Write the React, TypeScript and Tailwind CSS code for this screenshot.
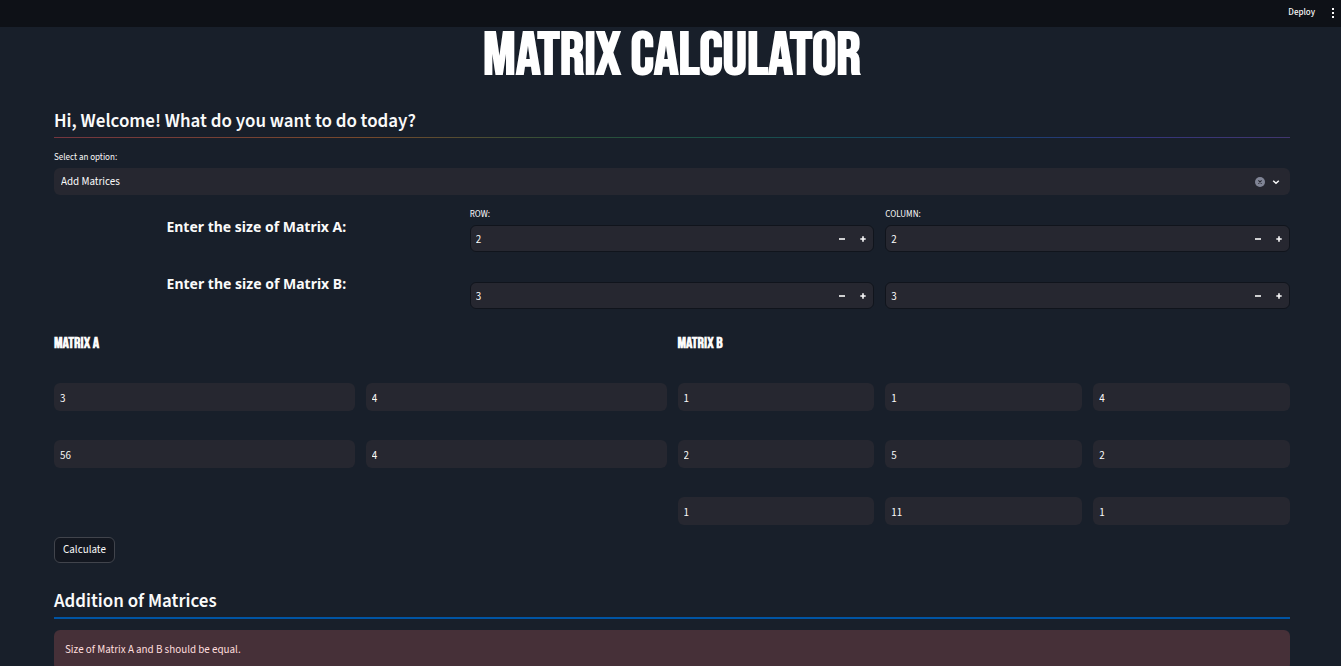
import React, { useState } from "react";

const sans = "font-['Source_Sans_Pro','Source_Sans_3','Noto_Sans_CJK_JP','Open_Sans',sans-serif]";
const display = "font-['Bebas_Neue','Roboto_Condensed',Roboto,sans-serif] font-bold";

function StepperGlyph({ plus }: { plus?: boolean }) {
  return (
    <svg viewBox="0 0 8 8" className="size-2" aria-hidden="true">
      <path d={plus ? "M1.3 3.2h1.9V1.3h1.6v1.9h1.9v1.6H4.8v1.9H3.2V4.8H1.3z" : "M1 3.2h6v1.6H1z"} fill="#fafafa" />
    </svg>
  );
}

function SizeInput({ label, name, initial }: { label?: string; name: string; initial: number }) {
  const [value, setValue] = useState(initial);
  return (
    <div className="flex flex-col">
      <label htmlFor={name} className="block h-[18px] text-[9px] leading-4">
        {label}
      </label>
      <div className="flex h-[27px] items-center rounded-md border border-[#10141c] bg-[#262730]">
        <input
          id={name}
          aria-label={name}
          value={value}
          onChange={(e) => setValue(Number(e.target.value) || 0)}
          className="h-full min-w-0 flex-1 bg-transparent px-[5px] pt-[2px] text-[11px] outline-none"
        />
        <button aria-label={`Decrease ${name}`} onClick={() => setValue(value - 1)} className="flex h-full w-[22px] items-center justify-center">
          <StepperGlyph />
        </button>
        <button aria-label={`Increase ${name}`} onClick={() => setValue(value + 1)} className="flex h-full w-5 items-center justify-center">
          <StepperGlyph plus />
        </button>
      </div>
    </div>
  );
}

function SizeRow({ matrix, size, labelled }: { matrix: string; size: number; labelled?: boolean }) {
  return (
    <div className="grid grid-cols-3 gap-[11px]">
      <h3 className="pt-[10px] text-center font-['Noto_Sans',sans-serif] text-[14px] font-bold leading-5">
        Enter the size of Matrix {matrix}:
      </h3>
      <SizeInput label={labelled ? "ROW:" : undefined} name={`Matrix ${matrix} rows`} initial={size} />
      <SizeInput label={labelled ? "COLUMN:" : undefined} name={`Matrix ${matrix} columns`} initial={size} />
    </div>
  );
}

function Cell({ name, value }: { name: string; value: string }) {
  return (
    <input
      aria-label={name}
      defaultValue={value}
      className="h-7 w-full min-w-0 rounded-md bg-[#262730] px-[6px] pt-[2px] text-[11px] outline-none"
    />
  );
}

function Matrix({ name, rows, columns }: { name: string; rows: string[][]; columns: string }) {
  return (
    <section>
      <h3 className={`${display} text-[16px] leading-[18px]`}>MATRIX {name}</h3>
      <div className="mt-[30px] flex flex-col gap-[29px]">
        {rows.map((row, r) => (
          <div key={r} className={`grid gap-[11px] ${columns}`}>
            {row.map((v, c) => (
              <Cell key={c} name={`${name} ${r + 1},${c + 1}`} value={v} />
            ))}
          </div>
        ))}
      </div>
    </section>
  );
}

export default function App() {
  return (
    <div className={`h-screen overflow-hidden bg-[#181f2a] text-[#fafafa] ${sans}`}>
      <header className="flex h-[27px] items-center justify-end gap-[14px] bg-[#0e1117] pb-[2px] pr-1">
        <button className="text-[9px] font-medium leading-4">Deploy</button>
        <button aria-label="Menu" className="flex w-2 justify-center">
          <svg viewBox="0 0 2 10" className="h-[10px] w-[2px]" fill="#fafafa">
            <path d="M0 0h2v2H0zM0 4h2v2H0zM0 8h2v2H0z" />
          </svg>
        </button>
      </header>
      <main className="pl-[54px] pr-[51px]">
        <h1 className={`${display} pt-[3px] text-center text-[61px] leading-[52px] text-white`}>MATRIX CALCULATOR</h1>
        <h2 className="mt-[27px] text-[19px] font-semibold leading-[26px]">Hi, Welcome! What do you want to do today?</h2>
        <div className="mt-[2px] h-px bg-[linear-gradient(to_right,#74363f,#77492c_25%,#2c5038_42%,#1a5048_55%,#14416f_75%,#34357a_88%,#41376f)]" />
        <label htmlFor="operation" className="mt-3 block text-[9px] leading-4">
          Select an option:
        </label>
        <div className="mt-[2px] flex h-[27px] items-center rounded-md bg-[#262730] pr-[9px]">
          <select id="operation" className="h-full flex-1 appearance-none bg-transparent px-[7px] pt-[2px] text-[11px] outline-none">
            <option>Add Matrices</option>
          </select>
          <button aria-label="Clear">
            <svg viewBox="0 0 10 10" className="size-[10px]">
              <circle cx="5" cy="5" r="5" fill="#808495" />
              <path d="M3.4 3.4l3.2 3.2M6.6 3.4L3.4 6.6" stroke="#262730" strokeWidth="1.1" />
            </svg>
          </button>
          <svg viewBox="0 0 10 10" className="ml-[6px] size-[10px]" fill="none" aria-hidden="true">
            <path d="M2.2 3.7L5 6.2l2.8-2.5" stroke="#fafafa" strokeWidth="1.5" />
          </svg>
        </div>
        <div className="mt-3 flex flex-col gap-3">
          <SizeRow matrix="A" size={2} labelled />
          <SizeRow matrix="B" size={3} />
        </div>
        <div className="mt-[26px] grid grid-cols-2 gap-[11px]">
          <Matrix name="A" columns="grid-cols-2" rows={[["3", "4"], ["56", "4"]]} />
          <Matrix name="B" columns="grid-cols-3" rows={[["1", "1", "4"], ["2", "5", "2"], ["1", "11", "1"]]} />
        </div>
        <button className="mt-3 block h-[26px] rounded-md border border-[#41444c] bg-[#131720] px-2 pt-px text-[11px]">Calculate</button>
        <h2 className="mt-[26px] text-[19px] font-semibold leading-[26px]">Addition of Matrices</h2>
        <div className="mt-[2px] h-[2px] bg-[#0054a3]" />
        <div role="alert" className="mt-[11px] rounded-md bg-[#463038] px-[11px] py-3 text-[11px] leading-4 text-[#ffdede]">
          Size of Matrix A and B should be equal.
        </div>
      </main>
    </div>
  );
}
